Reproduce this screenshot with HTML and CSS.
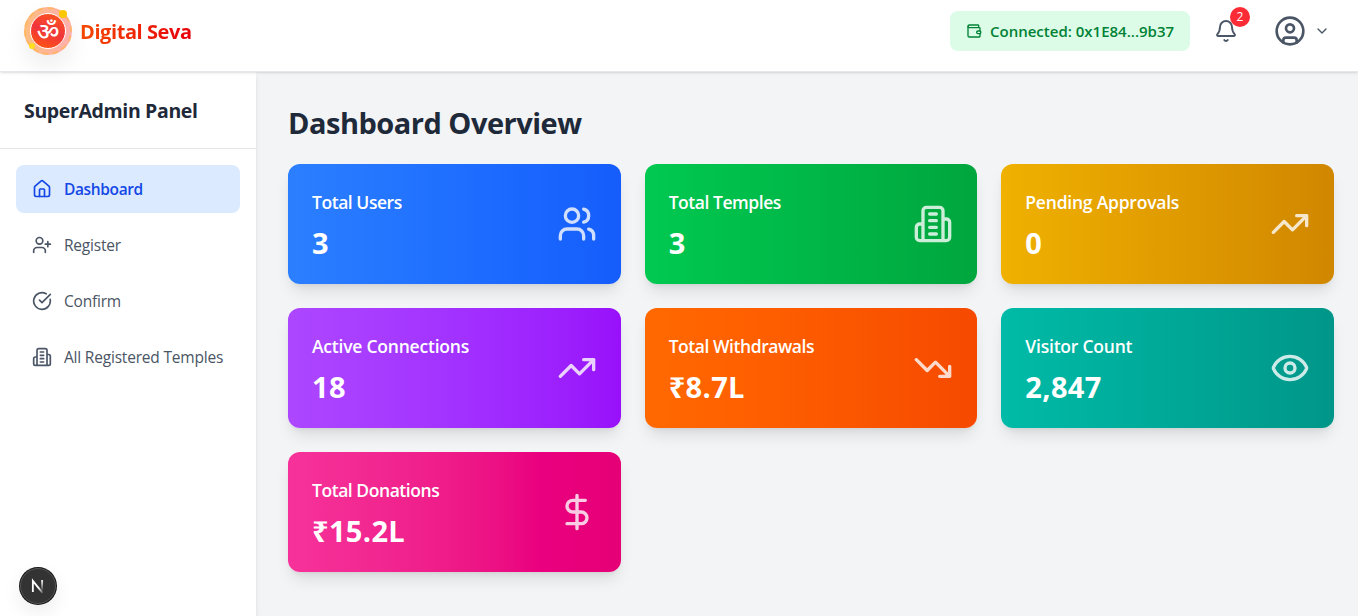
FILE: index.html
```html
<!DOCTYPE html>
<html lang="en">
<head>
<meta charset="utf-8">
<title>Digital Seva</title>
<link rel="stylesheet" href="styles.css">
</head>
<body>
<svg class="defs" width="0" height="0">
  <symbol id="trend-up" viewBox="0 0 24 24"><path d="M22 7l-8.5 8.5-5-5L2 17M16 7h6v6"/></symbol>
  <symbol id="building" viewBox="0 0 24 24"><path d="M6 22V4a2 2 0 0 1 2-2h8a2 2 0 0 1 2 2v18ZM6 12H4a2 2 0 0 0-2 2v6a2 2 0 0 0 2 2h2M18 9h2a2 2 0 0 1 2 2v9a2 2 0 0 1-2 2h-2M10 6h4M10 10h4M10 14h4M10 18h4"/></symbol>
</svg>
<header class="topbar">
  <div class="brand">
    <div class="logo">
      <div class="logo-core"><span class="om">ॐ</span></div>
      <i class="spark spark-top"></i><i class="spark spark-bottom"></i>
    </div>
    <span class="brand-name">Digital Seva</span>
  </div>
  <div class="actions">
    <div class="wallet">
      <svg class="icon i16" viewBox="0 0 24 24"><path d="M19 7V4a1 1 0 0 0-1-1H5a2 2 0 0 0 0 4h15a1 1 0 0 1 1 1v4h-3a2 2 0 0 0 0 4h3a1 1 0 0 0 1-1v-2a1 1 0 0 0-1-1"/><path d="M3 5v14a2 2 0 0 0 2 2h15a1 1 0 0 0 1-1v-4"/></svg>
      <span class="wallet-text">Connected: 0x1E84...9b37</span>
    </div>
    <div class="bell">
      <svg class="icon i24" viewBox="0 0 24 24"><path d="M10.268 21a2 2 0 0 0 3.464 0"/><path d="M3.262 15.326A1 1 0 0 0 4 17h16a1 1 0 0 0 .74-1.673C19.41 13.956 18 12.499 18 8A6 6 0 0 0 6 8c0 4.499-1.411 5.956-2.738 7.326"/></svg>
      <span class="badge">2</span>
    </div>
    <div class="account">
      <svg class="icon i32" viewBox="0 0 24 24"><circle cx="12" cy="12" r="10"/><circle cx="12" cy="10" r="3"/><path d="M7 20.662V19a2 2 0 0 1 2-2h6a2 2 0 0 1 2 2v1.662"/></svg>
      <svg class="icon i16" viewBox="0 0 24 24"><path d="m6 9 6 6 6-6"/></svg>
    </div>
  </div>
</header>
<div class="layout">
  <aside class="sidebar">
    <h2 class="panel-title"><span>SuperAdmin Panel</span></h2>
    <nav class="nav">
      <a class="nav-item active"><svg class="icon i20" viewBox="0 0 24 24"><path d="M15 21v-8a1 1 0 0 0-1-1h-4a1 1 0 0 0-1 1v8"/><path d="M3 10a2 2 0 0 1 .709-1.528l7-5.999a2 2 0 0 1 2.582 0l7 5.999A2 2 0 0 1 21 10v9a2 2 0 0 1-2 2H5a2 2 0 0 1-2-2z"/></svg><span>Dashboard</span></a>
      <a class="nav-item"><svg class="icon i20" viewBox="0 0 24 24"><path d="M16 21v-2a4 4 0 0 0-4-4H6a4 4 0 0 0-4 4v2"/><circle cx="9" cy="7" r="4"/><path d="M19 8v6M22 11h-6"/></svg><span>Register</span></a>
      <a class="nav-item"><svg class="icon i20" viewBox="0 0 24 24"><path d="M21.801 10A10 10 0 1 1 17 3.335"/><path d="m9 11 3 3L22 4"/></svg><span>Confirm</span></a>
      <a class="nav-item"><svg class="icon i20"><use href="#building"/></svg><span>All Registered Temples</span></a>
    </nav>
  </aside>
  <main class="main">
    <h1 class="title"><span>Dashboard Overview</span></h1>
    <div class="cards">
      <section class="card blue"><div><p class="label tight">Total Users</p><p class="value">3</p></div><svg class="icon i40" viewBox="0 0 24 24"><path d="M16 21v-2a4 4 0 0 0-4-4H6a4 4 0 0 0-4 4v2"/><circle cx="9" cy="7" r="4"/><path d="M22 21v-2a4 4 0 0 0-3-3.87M16 3.13a4 4 0 0 1 0 7.75"/></svg></section>
      <section class="card green"><div><p class="label tight">Total Temples</p><p class="value">3</p></div><svg class="icon i40"><use href="#building"/></svg></section>
      <section class="card yellow"><div><p class="label">Pending Approvals</p><p class="value">0</p></div><svg class="icon i40"><use href="#trend-up"/></svg></section>
      <section class="card purple"><div><p class="label">Active Connections</p><p class="value">18</p></div><svg class="icon i40"><use href="#trend-up"/></svg></section>
      <section class="card orange"><div><p class="label tight">Total Withdrawals</p><p class="value">₹8.7L</p></div><svg class="icon i40" viewBox="0 0 24 24"><path d="M22 17l-8.5-8.5-5 5L2 7M16 17h6v-6"/></svg></section>
      <section class="card teal"><div><p class="label">Visitor Count</p><p class="value">2,847</p></div><svg class="icon i40" viewBox="0 0 24 24"><path d="M2.062 12.348a1 1 0 0 1 0-.696 10.75 10.75 0 0 1 19.876 0 1 1 0 0 1 0 .696 10.75 10.75 0 0 1-19.876 0"/><circle cx="12" cy="12" r="3"/></svg></section>
      <section class="card pink"><div><p class="label tight">Total Donations</p><p class="value">₹15.2L</p></div><svg class="icon i40" viewBox="0 0 24 24"><path d="M12 2v20M17 5H9.500a3.500 3.500 0 0 0 0 7h5a3.500 3.500 0 0 1 0 7H6"/></svg></section>
    </div>
  </main>
</div>
<div class="dev-button">
  <svg width="16" height="16" viewBox="0 0 14 14"><defs><linearGradient id="fade" x1="0" y1="0" x2="0" y2="1"><stop offset="0" stop-color="#fff"/><stop offset="1" stop-color="#fff" stop-opacity="0.100"/></linearGradient><linearGradient id="fade-diag" x1="0" y1="0" x2="1" y2="1"><stop offset=".6" stop-color="#fff"/><stop offset="1" stop-color="#fff" stop-opacity="0.200"/></linearGradient></defs><path d="M2.500 12.200V2.500L11 13" fill="none" stroke="url(#fade-diag)" stroke-width="1.600"/><rect x="9.800" y="1.800" width="1.600" height="9" fill="url(#fade)"/></svg>
</div>
</body>
</html>
```
FILE: styles.css
```css
* { box-sizing: border-box; margin: 0; }
body { height: 616px; overflow: hidden; display: flex; flex-direction: column; background: #f3f4f6; font-family: "Open Sans", "Noto Sans", sans-serif; font-size: 16px; line-height: 24px; color: #1e2939; }
.defs { position: absolute; }
.icon { flex: none; fill: none; stroke: currentColor; stroke-width: 2; stroke-linecap: round; stroke-linejoin: round; }
.i16 { width: 16px; height: 16px; }
.i20 { width: 20px; height: 20px; }
.i24 { width: 24px; height: 24px; }
.i32 { width: 32px; height: 32px; }
.i40 { width: 40px; height: 40px; opacity: .8; }

.topbar { position: relative; z-index: 2; height: 72px; padding: 0 28px 9px 24px; display: flex; align-items: center; justify-content: space-between; background: #fff; border-bottom: 1px solid #e5e7eb; box-shadow: 0 1px 3px rgba(0,0,0,.1), 0 1px 2px -1px rgba(0,0,0,.1); }
.brand { display: flex; align-items: center; gap: 8px; }
.logo { position: relative; width: 48px; height: 48px; display: grid; place-items: center; border-radius: 50%; background: linear-gradient(90deg, #ffbd80, #ffaeb0); box-shadow: 0 12px 24px rgba(0,0,0,.07); }
.logo::before { content: ""; position: absolute; inset: 0; border: 2px dashed rgba(255,180,80,.65); border-radius: 50%; }
.logo-core { width: 36px; height: 36px; display: grid; place-items: center; border: 1px solid #fff; border-radius: 50%; background: linear-gradient(20deg, #ff5a0a, #f0343c 50%, #ff5a1a); color: #fff; }
.om { font: 500 24px/24px "Noto Sans", "Noto Sans Devanagari", sans-serif; }
.spark { position: absolute; border-radius: 50%; background: #fdc700; }
.spark-top { width: 8px; height: 8px; right: 5px; top: 3px; }
.spark-bottom { width: 6px; height: 6px; left: 5px; bottom: 6px; background: #ffdf20; }
.brand-name { font-size: 20px; line-height: 28px; font-weight: 700; letter-spacing: -.42px; background: linear-gradient(to right, #f54900, #e7000b); background-clip: text; color: transparent; padding-top: 2px; }
.actions { display: flex; align-items: center; gap: 24px; color: #4a5565; }
.wallet { width: 240px; height: 40px; padding: 0 16px; display: flex; align-items: center; gap: 8px; border-radius: 8px; background: #dcfce7; color: #008236; }
.wallet-text { font-weight: 600; font-size: 15px; white-space: nowrap; }
.bell { position: relative; height: 24px; margin-right: 12px; }
.bell .icon { stroke-width: 1.9; }
.badge { position: absolute; left: 16px; top: -12px; width: 20px; height: 20px; border-radius: 50%; background: #fb2c36; color: #fff; font-size: 12px; line-height: 20px; text-align: center; }
.account { display: flex; align-items: center; gap: 8px; }

.layout { flex: 1; display: flex; min-height: 0; }
.sidebar { width: 256px; background: #fff; box-shadow: 0 4px 6px -1px rgba(0,0,0,.1), 0 2px 4px -2px rgba(0,0,0,.1); }
.panel-title { height: 77px; padding: 25px 24px 0; border-bottom: 1px solid #e5e7eb; font-size: 19.5px; line-height: 28px; font-weight: 700; letter-spacing: -.36px; white-space: nowrap; }
.nav { padding: 16px; display: flex; flex-direction: column; gap: 8px; }
.nav-item { height: 48px; padding: 0 16px; display: flex; align-items: center; gap: 12px; border-radius: 8px; color: #4a5565; font-size: 15.5px; letter-spacing: -.2px; white-space: nowrap; }
.nav-item.active { background: #dbeafe; color: #1447e6; font-weight: 600; letter-spacing: -.37px; }
.main { flex: 1; padding: 32px 24px 0 32px; }
.title { height: 60px; font-size: 29px; line-height: 38px; font-weight: 700; letter-spacing: -.5px; white-space: nowrap; }
.cards { display: grid; grid-template-columns: repeat(3, 1fr); gap: 24px; }
.card { height: 120px; padding: 24px; display: flex; align-items: center; justify-content: space-between; border-radius: 12px; color: #fff; box-shadow: 0 10px 15px -3px rgba(0,0,0,.1), 0 4px 6px -4px rgba(0,0,0,.1); }
.label { font-size: 17.5px; line-height: 28px; font-weight: 600; letter-spacing: -.22px; }
.tight { letter-spacing: -.45px; }
.value { padding-top: 1px; margin: 8px 0 -1px; font-size: 29px; line-height: 36px; font-weight: 700; letter-spacing: .35px; }
.blue { background: linear-gradient(to right in oklab, oklch(62.3% .214 259.815), oklch(54.6% .245 262.881)); }
.green { background: linear-gradient(to right in oklab, oklch(72.3% .219 149.579), oklch(62.7% .194 149.214)); }
.yellow { background: linear-gradient(to right in oklab, oklch(79.5% .184 86.047), oklch(68.1% .162 75.834)); }
.purple { background: linear-gradient(to right in oklab, oklch(62.7% .265 303.9), oklch(55.8% .288 302.321)); }
.orange { background: linear-gradient(to right in oklab, oklch(70.5% .213 47.604), oklch(64.6% .222 41.116)); }
.teal { background: linear-gradient(to right in oklab, oklch(70.4% .14 182.503), oklch(60% .118 184.704)); }
.pink { background: linear-gradient(to right in oklab, oklch(65.6% .241 354.308), oklch(59.2% .249 .584)); }

.dev-button { position: absolute; z-index: 3; left: 20px; bottom: 12px; width: 36px; height: 36px; display: grid; place-items: center; border-radius: 50%; background: #333; border: 1px solid #555; box-shadow: 0 0 0 1px #171717, 0 8px 20px rgba(0,0,0,.08); }
```
